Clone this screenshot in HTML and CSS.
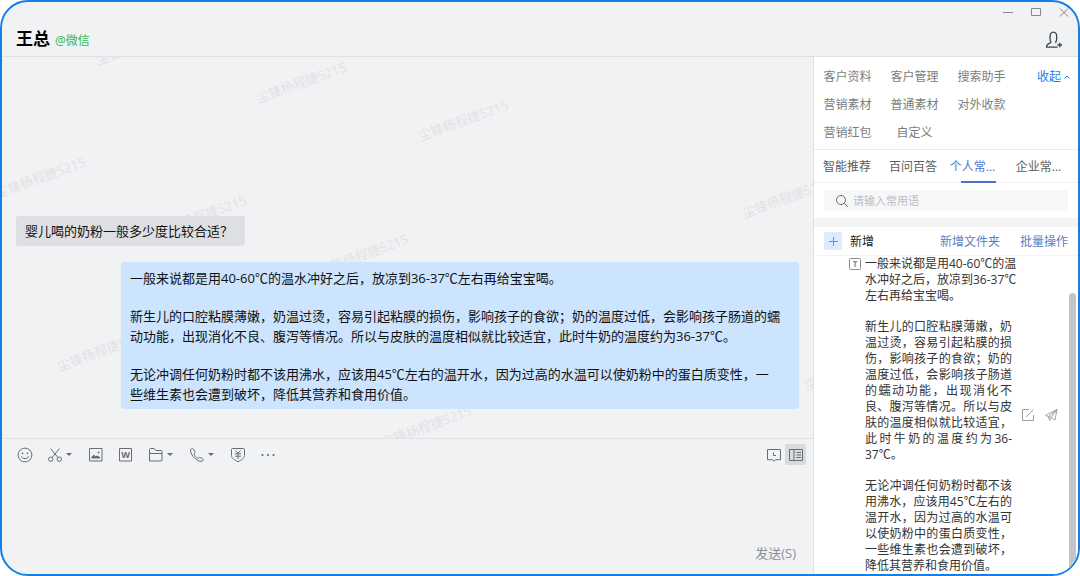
FILE: index.html
```html
<!DOCTYPE html>
<html lang="zh-CN">
<head>
	<meta charset="utf-8">
	<meta name="viewport" content="width=device-width, initial-scale=1">
	<title>王总</title>
	<link rel="stylesheet" href="styles.css">
</head>
<body>
<div class="window">
	<header class="header">
		<div class="contact">
			<h1 class="contact-name">王总</h1>
			<span class="contact-from">@微信</span>
		</div>
		<div class="header-right">
			<div class="controls">
				<button class="control" aria-label="最小化"><svg width="12" height="12" viewBox="0 0 12 12"><path d="M1 6.500h10"/></svg></button>
				<button class="control" aria-label="最大化"><svg width="12" height="12" viewBox="0 0 12 12"><path d="M1.500 2.500h9v7h-9z"/></svg></button>
				<button class="control" aria-label="关闭"><svg width="12" height="12" viewBox="0 0 12 12"><path d="M2 2.500l8 8M10 2.500l-8 8"/></svg></button>
			</div>
			<button class="add-member" aria-label="添加成员">
				<svg width="18" height="18" viewBox="0 0 18 18"><path d="M12.500 16.200H1.600c-.5-2.200 1.200-3.200 3.300-4.100 1.200-.5 1.300-1.300.7-2C4.700 9 5.200 7.700 5.100 6 4.900 2.900 6.300 1.200 8.400 1.200s3.500 1.700 3.300 4.800c-.1 1.700.3 3-.6 4.100-.5.7-.4 1.300.3 1.700"/><path d="M12.500 14h4.500M14.750 11.750v4.500"/></svg>
			</button>
		</div>
	</header>

	<div class="main">
		<section class="chat">
			<div class="messages">
				<svg class="watermark" aria-hidden="true">
					<text transform="translate(141 -8) rotate(-20)">尘锋杨程捷5215</text>
					<text transform="translate(301 30) rotate(-20)">尘锋杨程捷5215</text>
					<text transform="translate(463 68) rotate(-20)">尘锋杨程捷5215</text>
					<text transform="translate(40 125) rotate(-20)">尘锋杨程捷5215</text>
					<text transform="translate(201 163) rotate(-20)">尘锋杨程捷5215</text>
					<text transform="translate(363 202) rotate(-20)">尘锋杨程捷5215</text>
					<text transform="translate(787 145) rotate(-20)">尘锋杨程捷5215</text>
					<text transform="translate(102 298) rotate(-20)">尘锋杨程捷5215</text>
					<text transform="translate(426 374) rotate(-20)">尘锋杨程捷5215</text>
					<text transform="translate(849 317) rotate(-20)">尘锋杨程捷5215</text>
				</svg>
				<div class="bubble bubble-in">婴儿喝的奶粉一般多少度比较合适？</div>
				<div class="bubble bubble-out">
					<p>一般来说都是用40-60℃的温水冲好之后，放凉到36-37℃左右再给宝宝喝。</p>
					<p>新生儿的口腔粘膜薄嫩，奶温过烫，容易引起粘膜的损伤，影响孩子的食欲；奶的温度过低，会影响孩子肠道的蠕<br>动功能，出现消化不良、腹泻等情况。所以与皮肤的温度相似就比较适宜，此时牛奶的温度约为36-37℃。</p>
					<p>无论冲调任何奶粉时都不该用沸水，应该用45℃左右的温开水，因为过高的水温可以使奶粉中的蛋白质变性，一<br>些维生素也会遭到破坏，降低其营养和食用价值。</p>
				</div>
			</div>
			<div class="composer">
				<div class="toolbar">
					<button class="tool" aria-label="表情"><svg width="16" height="16" viewBox="0 0 16 16"><circle cx="8" cy="8" r="6.900"/><circle class="dot" cx="5.600" cy="6.300" r=".9"/><circle class="dot" cx="10.400" cy="6.300" r=".9"/><path d="M4.500 9.300c.8 3 6.200 3 7 0"/></svg></button>
					<button class="tool tool-menu" aria-label="截图"><svg width="16" height="16" viewBox="0 0 16 16"><circle cx="3.700" cy="12.200" r="2.200"/><circle cx="12.300" cy="12.200" r="2.200"/><path d="M3.500 1.500l7.500 9M12.500 1.500L5 10.500"/></svg><i class="caret"></i></button>
					<button class="tool" aria-label="图片"><svg width="16" height="16" viewBox="0 0 16 16"><path d="M1.500 1.500h12.500v12.500H1.500z"/><path class="dot" d="M3.500 11.500V9.800l2.300-2 1.900 1.500 1.300-.8 3 1.500v1.500z"/><circle class="dot" cx="10.500" cy="5.500" r=".9"/></svg></button>
					<button class="tool" aria-label="文档"><svg width="16" height="16" viewBox="0 0 16 16"><path d="M1.500 1.500h12v12.500h-12z"/><text x="7.500" y="11">W</text></svg></button>
					<button class="tool tool-menu" aria-label="文件"><svg width="16" height="16" viewBox="0 0 16 16"><path d="M1.500 14V2.500q0-1 1-1h3.700l1.500 2h5.300q1 0 1 1V13q0 1-1 1zM1.500 6.500H14"/></svg><i class="caret"></i></button>
					<button class="tool tool-menu" aria-label="通话"><svg width="16" height="16" viewBox="0 0 16 16"><path d="M1.700 2.600C2.500 1.300 3.600 1 4.300 2L6 4.800c.4.800-.3 1.300-1 2 .4 1.900 2.300 3.800 4.200 4.600.8-.8 1.300-1.400 2.200-.9l2.300 1.300c1 .6.7 1.500-.2 2.200C9.700 16.200.5 8.200 1.700 2.600z"/></svg><i class="caret"></i></button>
					<button class="tool" aria-label="红包"><svg width="16" height="16" viewBox="0 0 16 16"><path d="M2.500 1.500h11q1 0 1 1v6c0 3-3.500 4.500-6.500 6.300-3-1.800-6.500-3.300-6.500-6.300v-6q0-1 1-1z"/><path d="M5.500 3.500L8 6.200l2.500-2.700M8 6.200V12M5 6.700h6M5 9.200h6"/></svg></button>
					<button class="tool" aria-label="更多"><svg width="16" height="16" viewBox="0 0 16 16"><circle class="dot" cx="2.500" cy="8" r="1.100"/><circle class="dot" cx="8" cy="8" r="1.100"/><circle class="dot" cx="13.500" cy="8" r="1.100"/></svg></button>
					<div class="toolbar-right">
						<button class="tool" aria-label="聊天记录"><svg width="16" height="16" viewBox="0 0 16 16"><path d="M1.500 2.500h13v10.200H9.700L8 14.300l-1.700-1.600H1.500zM7.500 5.500v3H10"/></svg></button>
						<button class="tool tool-on" aria-label="侧边栏"><svg width="16" height="16" viewBox="0 0 16 16"><path d="M1.500 2.500h13v11h-13zM6 2.500v11M8.500 5.500H13M8.500 8H13M8.500 10.500H13"/></svg></button>
					</div>
				</div>
				<textarea class="editor" aria-label="输入消息"></textarea>
				<button class="send">发送(S)</button>
			</div>
		</section>

		<aside class="sidebar">
			<nav class="links">
				<div class="link-grid">
					<a href="#">客户资料</a>
					<a href="#">客户管理</a>
					<a href="#">搜索助手</a>
					<a href="#">营销素材</a>
					<a href="#">普通素材</a>
					<a href="#">对外收款</a>
					<a href="#">营销红包</a>
					<a href="#">自定义</a>
				</div>
				<button class="fold">收起<svg width="8" height="6" viewBox="0 0 8 6"><path d="M1.500 4.500L4 2l2.500 2.500"/></svg></button>
			</nav>
			<div class="tabs">
				<button class="tab">智能推荐</button>
				<button class="tab">百问百答</button>
				<button class="tab tab-cut active">个人常...</button>
				<button class="tab tab-cut">企业常...</button>
			</div>
			<label class="search">
				<svg width="14" height="14" viewBox="0 0 14 14"><circle cx="6" cy="6" r="4.500"/><path d="M9.300 9.300l3.500 3.500"/></svg>
				<input type="text" placeholder="请输入常用语" aria-label="请输入常用语">
			</label>
			<div class="actions">
				<button class="plus" aria-label="新增"><svg width="11" height="11" viewBox="0 0 11 11"><path d="M5.500 1v9M1 5.500h9"/></svg></button>
				<span class="actions-title">新增</span>
				<a class="action" href="#">新增文件夹</a>
				<a class="action" href="#">批量操作</a>
			</div>
			<div class="phrase">
				<svg class="phrase-type" width="12" height="12" viewBox="0 0 12 12"><rect x=".5" y=".5" width="11" height="11" rx="1"/><text x="6" y="9">T</text></svg>
				<div class="phrase-text">
					<p class="phrase-lead">一般来说都是用40-60℃的温<br>水冲好之后，放凉到36-37℃<br>左右再给宝宝喝。</p>
					<p>新生儿的口腔粘膜薄嫩，奶温过烫，容易引起粘膜的损伤，影响孩子的食欲；奶的温度过低，会影响孩子肠道的蠕动功能，出现消化不良、腹泻等情况。所以与皮肤的温度相似就比较适宜，此时牛奶的温度约为36-37℃。</p>
					<p>无论冲调任何奶粉时都不该用沸水，应该用45℃左右的温开水，因为过高的水温可以使奶粉中的蛋白质变性，一些维生素也会遭到破坏，降低其营养和食用价值。</p>
				</div>
				<div class="phrase-tools">
					<button aria-label="编辑"><svg width="14" height="14" viewBox="0 0 14 14"><path d="M8 1.500H1.500v11h11V7M5 9l7.500-7.500"/></svg></button>
					<button aria-label="发送"><svg width="14" height="14" viewBox="0 0 14 14"><path d="M1.500 7.500L13 1.500l-2 10.500-3.800-2.500zM4.500 8.700L13 1.500 7.200 9.500l-1.700 3z"/></svg></button>
				</div>
				<div class="scroll-thumb"></div>
			</div>
		</aside>
	</div>
</div>
</body>
</html>
```

FILE: styles.css
```css
* {
	box-sizing: border-box;
}
body {
	margin: 0;
	background: #fff;
	color: #1a1a1a;
	font-family: "Open Sans", "Noto Sans CJK SC", sans-serif;
	font-size: 12px;
}
button {
	display: flex;
	align-items: center;
	justify-content: center;
	padding: 0;
	border: none;
	background: none;
	color: inherit;
	font: inherit;
}
a {
	text-decoration: none;
}
p {
	margin: 0;
}
svg {
	display: block;
	fill: none;
	stroke: currentColor;
}
.window {
	display: flex;
	flex-direction: column;
	height: 100vh;
	overflow: hidden;
	border: 2px solid #1480e6;
	border-radius: 28px;
	background: #f1f2f4;
}

/* header */
.header {
	display: flex;
	flex: none;
	justify-content: space-between;
	height: 55px;
	border-bottom: 1px solid #e0e1e3;
}
.contact {
	display: flex;
	align-items: center;
	gap: 5px;
	padding: 19px 0 0 14px;
}
.contact-name {
	margin: 0;
	color: #000;
	font-size: 17px;
	line-height: 24px;
}
.contact-from {
	padding-top: 2px;
	color: #39b456;
}
.header-right {
	display: flex;
	flex-direction: column;
	align-items: flex-end;
	gap: 13px;
	padding: 4px 8px 0 0;
}
.controls {
	display: flex;
	gap: 16px;
	color: #85888d;
}
.add-member {
	margin-right: 7px;
	color: #3c3f44;
}
.add-member svg {
	stroke-width: 1.3;
}

/* chat */
.main {
	display: flex;
	flex: 1;
	min-height: 0;
}
.chat {
	display: flex;
	flex: 1;
	flex-direction: column;
	min-width: 0;
}
.messages {
	position: relative;
	display: flex;
	flex: 1;
	flex-direction: column;
	justify-content: flex-end;
	gap: 16px;
	padding: 0 14px 29px;
	overflow: hidden;
}
.watermark {
	position: absolute;
	top: 0;
	left: 0;
	width: 100%;
	height: 100%;
	fill: #e1e2e4;
	stroke: none;
	font-size: 13px;
	text-anchor: middle;
}
.bubble {
	position: relative;
	border-radius: 3px;
	color: #111;
	font-size: 13px;
	line-height: 20px;
}
.bubble-in {
	align-self: flex-start;
	padding: 5px 12px 5px 9px;
	background: #dedfe2;
}
.bubble-out {
	align-self: flex-end;
	width: 100%;
	max-width: 678px;
	padding: 6px 9px 5px;
	background: #cce4fd;
}
.bubble-out p + p {
	margin-top: 18px;
}

/* composer */
.composer {
	display: flex;
	flex: none;
	flex-direction: column;
	height: 136px;
	border-top: 1px solid #e0e1e3;
}
.toolbar {
	display: flex;
	align-items: center;
	gap: 14px;
	padding: 5px 7px 0 15px;
	color: #686d74;
}
.tool text {
	fill: currentColor;
	stroke: none;
	font-size: 9px;
	font-weight: 700;
	text-anchor: middle;
}
.tool-menu {
	gap: 3px;
	padding-right: 2px;
}
.dot {
	fill: currentColor;
	stroke: none;
}
.caret {
	border: 3px solid transparent;
	border-top-color: currentColor;
	border-bottom: none;
}
.toolbar-right {
	display: flex;
	align-items: center;
	gap: 3px;
	margin-left: auto;
}
.tool-on {
	width: 21px;
	height: 21px;
	border-radius: 2px;
	background: #d8dadc;
}
.editor {
	flex: 1;
	padding: 8px 16px;
	border: none;
	outline: none;
	background: none;
	font: inherit;
	resize: none;
}
.send {
	align-self: flex-end;
	margin: 0 17px 11px 0;
	color: #8a8f96;
	font-size: 13px;
	line-height: 20px;
}

/* sidebar */
.sidebar {
	display: flex;
	flex: none;
	flex-direction: column;
	width: 265px;
	border-left: 1px solid #e0e1e3;
	background: #fff;
}
.links {
	display: flex;
	align-items: flex-start;
	justify-content: space-between;
	padding: 6px 7px 2px 0;
	border-bottom: 1px solid #ececee;
}
.link-grid {
	display: grid;
	grid-template-columns: repeat(3, 67px);
}
.link-grid a {
	color: #7d7d7d;
	line-height: 28px;
	text-align: center;
}
.fold {
	gap: 2px;
	color: #1a80ea;
	line-height: 28px;
}
.tabs {
	display: flex;
	border-bottom: 1px solid #f0f0f2;
}
.tab {
	position: relative;
	width: 66px;
	height: 32px;
	color: #5c5c5c;
}
.tab-cut {
	padding-right: 13px;
}
.active {
	color: #4f7acb;
}
.active::after {
	content: "";
	position: absolute;
	bottom: -1px;
	left: 15px;
	width: 35px;
	height: 2px;
	background: #4a74c4;
}
.search {
	display: flex;
	align-items: center;
	gap: 4px;
	height: 21px;
	margin: 7px 10px;
	padding-left: 11px;
	border-radius: 2px;
	background: #f6f7f9;
	color: #6b6b6b;
}
.search input {
	flex: 1;
	min-width: 0;
	padding: 0;
	border: none;
	outline: none;
	background: none;
	font: inherit;
	font-size: 11px;
}
.search input::placeholder {
	color: #bdbdbf;
}
.actions {
	display: flex;
	align-items: center;
	padding: 5px 10px;
	border-top: 9px solid #f4f4f4;
	border-bottom: 1px solid #f4f4f5;
}
.plus {
	width: 18px;
	height: 18px;
	border-radius: 2px;
	background: #dcebff;
	color: #5a94ee;
}
.actions-title {
	margin: 0 auto 0 8px;
}
.action {
	margin-left: 20px;
	color: #5a7fc6;
}
.phrase {
	position: relative;
	display: flex;
	flex: 1;
	min-height: 0;
	padding-left: 35px;
	overflow: hidden;
}
.phrase-type {
	flex: none;
	margin: 2px 4px 0 0;
	color: #8a8a8a;
}
.phrase-type text {
	fill: currentColor;
	stroke: none;
	font-size: 8px;
	font-weight: 700;
	text-anchor: middle;
}
.phrase-text {
	flex: none;
	width: 147px;
	color: #333;
	line-height: 16px;
	text-align: justify;
}
.phrase-text p + p {
	margin-top: 15px;
}
.phrase-lead {
	white-space: nowrap;
}
.phrase-tools {
	display: flex;
	align-self: center;
	gap: 9px;
	margin-left: 9px;
	color: #a0a0a0;
}
.scroll-thumb {
	position: absolute;
	top: 37px;
	right: 2px;
	bottom: 0;
	width: 7px;
	border-radius: 4px 4px 0 0;
	background: #c2c5ca;
}
```
